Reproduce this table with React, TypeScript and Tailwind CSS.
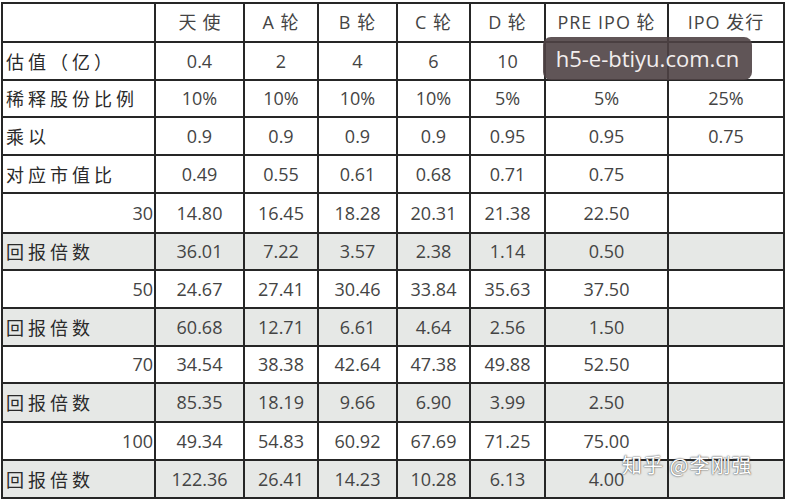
import { Fragment } from "react";

const cols = ["", "天使", "A 轮", "B 轮", "C 轮", "D 轮", "PRE IPO 轮", "IPO 发行"];

type Row = { label: string; right?: boolean; gray?: boolean; cells: string[] };

const rows: Row[] = [
  { label: "估值（亿）", cells: ["0.4", "2", "4", "6", "10", "", ""] },
  { label: "稀释股份比例", cells: ["10%", "10%", "10%", "10%", "5%", "5%", "25%"] },
  { label: "乘以", cells: ["0.9", "0.9", "0.9", "0.9", "0.95", "0.95", "0.75"] },
  { label: "对应市值比", cells: ["0.49", "0.55", "0.61", "0.68", "0.71", "0.75", ""] },
  { label: "30", right: true, cells: ["14.80", "16.45", "18.28", "20.31", "21.38", "22.50", ""] },
  { label: "回报倍数", gray: true, cells: ["36.01", "7.22", "3.57", "2.38", "1.14", "0.50", ""] },
  { label: "50", right: true, cells: ["24.67", "27.41", "30.46", "33.84", "35.63", "37.50", ""] },
  { label: "回报倍数", gray: true, cells: ["60.68", "12.71", "6.61", "4.64", "2.56", "1.50", ""] },
  { label: "70", right: true, cells: ["34.54", "38.38", "42.64", "47.38", "49.88", "52.50", ""] },
  { label: "回报倍数", gray: true, cells: ["85.35", "18.19", "9.66", "6.90", "3.99", "2.50", ""] },
  { label: "100", right: true, cells: ["49.34", "54.83", "60.92", "67.69", "71.25", "75.00", ""] },
  { label: "回报倍数", gray: true, cells: ["122.36", "26.41", "14.23", "10.28", "6.13", "4.00", ""] },
];

const font = { fontFamily: '"Open Sans", "Noto Sans CJK SC", sans-serif' };

export default function App() {
  return (
    <div className="relative w-[786px] h-[500px] bg-white overflow-hidden" style={font}>
      <div className="ml-px mt-[2px] inline-grid bg-[#262626] p-[2px] gap-[2px] grid-cols-[151px_87px_72px_77px_71px_73px_121px_114px] grid-rows-[37px_36px_35px_36px_36px_38px_35px_36px_36px_35px_37px_36px_36px] text-[18px] text-[#444]">
        {cols.map((c, i) => (
          <div
            key={i}
            className={`bg-white flex items-center justify-center whitespace-nowrap ${i === 1 ? "tracking-[6px] pl-[6px]" : "tracking-[1px]"}`}
          >
            {c}
          </div>
        ))}
        {rows.map((r, ri) => (
          <Fragment key={ri}>
            <div
              className={`flex items-center whitespace-nowrap ${r.gray ? "bg-[#e6e8e6]" : "bg-white"} ${
                r.right ? "justify-end pr-px" : "pl-[3px] tracking-[4px] font-['Noto_Sans_CJK_SC'] text-[#2a2a2a]"
              }`}
            >
              {r.label}
            </div>
            {r.cells.map((c, ci) => (
              <div
                key={ci}
                className={`flex items-center justify-center ${r.gray ? "bg-[#e6e8e6]" : "bg-white"}`}
              >
                {c}
              </div>
            ))}
          </Fragment>
        ))}
      </div>

      <div className="absolute left-[543px] top-[37px] w-[209px] h-[43px] rounded-lg bg-[#4f4245]/90 flex items-center justify-center text-[22px] text-[#f2eeee]">
        h5-e-btiyu.com.cn
      </div>

      <div className="absolute left-[622px] top-[450px] text-[20px] text-white font-['Noto_Sans_CJK_SC'] [text-shadow:0_0_2px_#555,0_0_1px_#555] tracking-[1px]">
        知乎 @李刚强
      </div>
    </div>
  );
}
